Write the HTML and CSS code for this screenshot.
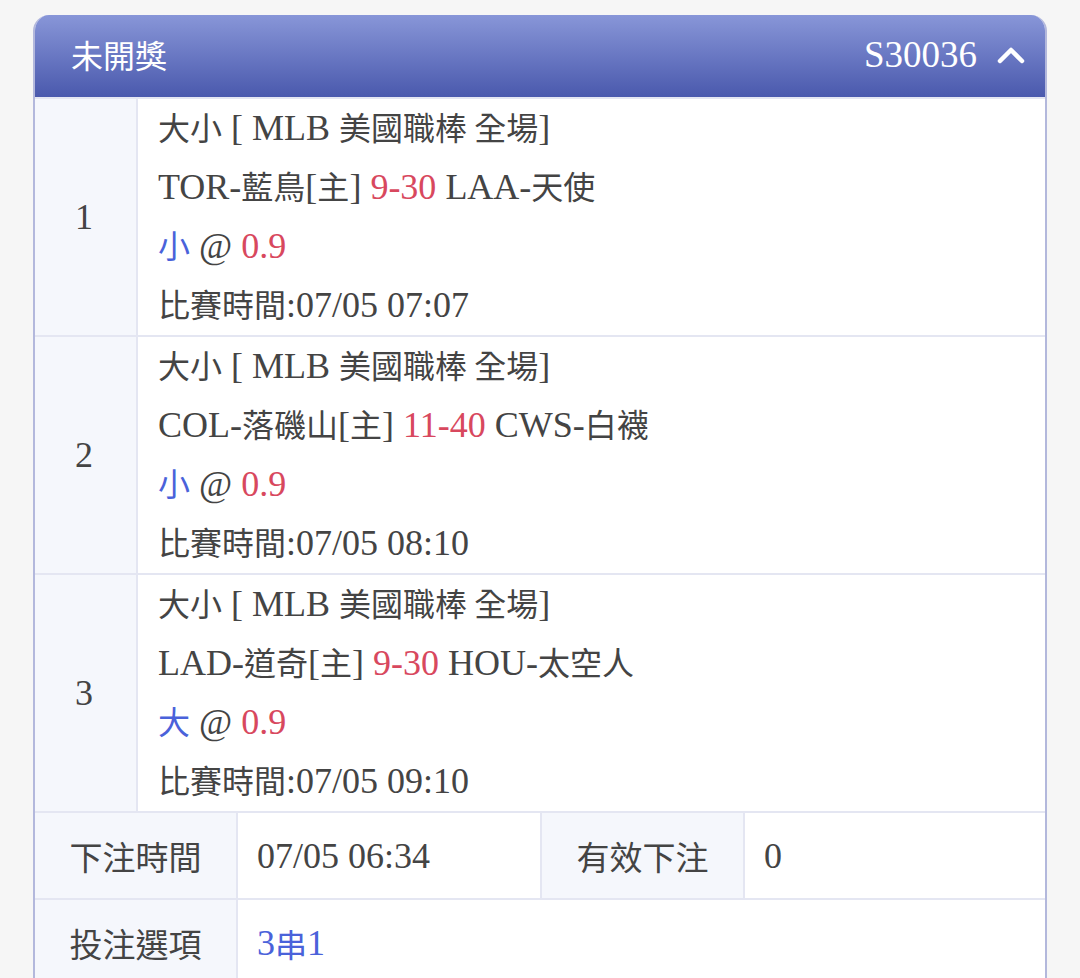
FILE: index.html
```html
<!DOCTYPE html>
<html lang="zh-Hant">
<head>
    <meta charset="UTF-8">
    <meta name="viewport" content="width=device-width, initial-scale=1.0">
    <title>未開獎</title>
    <link rel="stylesheet" href="styles.css">
</head>
<body>
    <div class="card">
        <div class="card-header">
            <span class="status">未開獎</span>
            <span class="order">S30036
                <svg class="chevron" viewBox="0 0 28 20" width="28" height="20">
                    <path d="M3 17 L14 6 L25 17" fill="none" stroke="#fff" stroke-width="4.5" stroke-linecap="round" stroke-linejoin="round"/>
                </svg>
            </span>
        </div>

        <div class="leg">
            <div class="leg-no">1</div>
            <div class="leg-body">
                <div><span class="zh">大小</span> [ MLB <span class="zh">美國職棒 全場</span>]</div>
                <div>TOR-<span class="zh">藍鳥</span>[<span class="zh">主</span>] <span class="red">9-30</span> LAA-<span class="zh">天使</span></div>
                <div><span class="zh blue">小</span> @ <span class="red">0.9</span></div>
                <div><span class="zh">比賽時間</span>:07/05 07:07</div>
            </div>
        </div>
        <div class="leg">
            <div class="leg-no">2</div>
            <div class="leg-body">
                <div><span class="zh">大小</span> [ MLB <span class="zh">美國職棒 全場</span>]</div>
                <div>COL-<span class="zh">落磯山</span>[<span class="zh">主</span>] <span class="red">11-40</span> CWS-<span class="zh">白襪</span></div>
                <div><span class="zh blue">小</span> @ <span class="red">0.9</span></div>
                <div><span class="zh">比賽時間</span>:07/05 08:10</div>
            </div>
        </div>
        <div class="leg">
            <div class="leg-no">3</div>
            <div class="leg-body">
                <div><span class="zh">大小</span> [ MLB <span class="zh">美國職棒 全場</span>]</div>
                <div>LAD-<span class="zh">道奇</span>[<span class="zh">主</span>] <span class="red">9-30</span> HOU-<span class="zh">太空人</span></div>
                <div><span class="zh blue">大</span> @ <span class="red">0.9</span></div>
                <div><span class="zh">比賽時間</span>:07/05 09:10</div>
            </div>
        </div>

        <div class="info-row">
            <div class="label">下注時間</div>
            <div class="value">07/05 06:34</div>
            <div class="label">有效下注</div>
            <div class="value">0</div>
        </div>
        <div class="info-row">
            <div class="label">投注選項</div>
            <div class="value wide blue">3<span class="zh">串</span>1</div>
        </div>
    </div>
</body>
</html>
```

FILE: styles.css
```css
body {
    margin: 0;
    padding: 15px 33px 0;
    background-color: #f6f6f6;
    color: #444;
    font-family: "Liberation Serif", "Noto Sans CJK TC", serif;
    font-size: 36px;
}
.zh {
    font-family: "Noto Sans CJK TC", sans-serif;
    font-size: 32px;
    line-height: 1;
}
.card {
    background-color: #fff;
    border-left: 2px solid #b3b8dc;
    border-right: 2px solid #b3b8dc;
    border-radius: 16px 16px 0 0;
    overflow: hidden;
}
.card-header {
    height: 82px;
    display: flex;
    align-items: center;
    justify-content: space-between;
    padding: 0 22px 0 38px;
    background: linear-gradient(to bottom, #8896d8, #4a59ad);
    color: #fff;
    margin: 0 -2px;
}
.status {
    font-family: "Noto Sans CJK TC", sans-serif;
    font-size: 32px;
    position: relative;
    top: -2px;
}
.order {
    display: flex;
    align-items: center;
    gap: 20px;
    font-size: 37px;
    position: relative;
    top: -2px;
}
.chevron {
    display: block;
}
.leg {
    display: flex;
    border-top: 2px solid #e4e6f2;
}
.leg:first-of-type {
    border-top: none;
}
.leg-no {
    width: 98px;
    flex-shrink: 0;
    display: flex;
    align-items: center;
    justify-content: center;
    background-color: #f5f7fc;
    border-right: 2px solid #e4e6f2;
    padding-right: 3px;
}
.leg-body {
    padding: 0 0 0 20px;
    white-space: nowrap;
}
.leg-body > div {
    height: 59px;
    line-height: 59px;
}
.red {
    color: #d8485e;
}
.blue {
    color: #4a62da;
}
.info-row {
    display: flex;
    border-top: 2px solid #e4e6f2;
    height: 85px;
}
.label {
    width: 201px;
    flex-shrink: 0;
    display: flex;
    align-items: center;
    justify-content: center;
    background-color: #f5f7fc;
    border-right: 2px solid #e4e6f2;
    font-family: "Noto Sans CJK TC", sans-serif;
    font-size: 33px;
}
.value {
    width: 283px;
    flex-shrink: 0;
    display: flex;
    align-items: center;
    padding-left: 19px;
    border-right: 2px solid #e4e6f2;
}
.value:last-child {
    flex: 1;
    border-right: none;
}
.value.wide {
    flex: 1;
}
```
